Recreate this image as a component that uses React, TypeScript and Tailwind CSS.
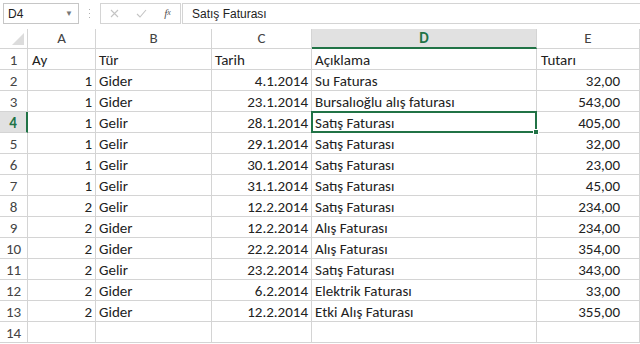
import React from "react";

const rows: [string, string, string, string, string][] = [
  ["1", "Gider", "4.1.2014", "Su Faturas", "32,00"],
  ["1", "Gider", "23.1.2014", "Bursalıoğlu alış faturası", "543,00"],
  ["1", "Gelir", "28.1.2014", "Satış Faturası", "405,00"],
  ["1", "Gelir", "29.1.2014", "Satış Faturası", "32,00"],
  ["1", "Gelir", "30.1.2014", "Satış Faturası", "23,00"],
  ["1", "Gelir", "31.1.2014", "Satış Faturası", "45,00"],
  ["2", "Gelir", "12.2.2014", "Satış Faturası", "234,00"],
  ["2", "Gider", "12.2.2014", "Alış Faturası", "234,00"],
  ["2", "Gider", "22.2.2014", "Alış Faturası", "354,00"],
  ["2", "Gelir", "23.2.2014", "Satış Faturası", "343,00"],
  ["2", "Gider", "6.2.2014", "Elektrik Faturası", "33,00"],
  ["2", "Gider", "12.2.2014", "Etki Alış Faturası", "355,00"],
];

const cols = "grid grid-cols-[28px_68px_116px_100px_225px_103px]";
const cell = "h-[21px] border-r border-b border-[#d4d4d4] flex items-center overflow-hidden whitespace-nowrap pt-[2px]";

export default function App() {
  return (
    <div className="w-[640px] h-[344px] overflow-hidden bg-white text-[#222] font-['Carlito','Lato','Liberation_Sans',sans-serif]">
      {/* formula bar */}
      <div className="h-[29px] flex items-start pt-[3px] font-['Liberation_Sans',sans-serif]">
        <div className="ml-[3px] w-[76px] h-[21px] border border-[#c6c6c6] flex items-center justify-between pl-[4px] pr-[5px] text-[12px] text-[#222]">
          <span>D4</span>
          <span className="text-[8px] text-[#777]">▼</span>
        </div>
        <div className="w-[21px] h-[21px] flex items-center justify-center">
          <svg width="3" height="11" viewBox="0 0 3 11">
            <rect x="1" y="1" width="1" height="1" fill="#b0b0b0" />
            <rect x="1" y="5" width="1" height="1" fill="#b0b0b0" />
            <rect x="1" y="9" width="1" height="1" fill="#b0b0b0" />
          </svg>
        </div>
        <div className="w-[81px] h-[21px] border border-[#d4d4d4] flex items-center">
          <div className="w-[27px] flex justify-center">
            <svg width="9" height="9" viewBox="0 0 9 9">
              <path d="M1 1L8 8M8 1L1 8" stroke="#c4c4c4" strokeWidth="1.1" />
            </svg>
          </div>
          <div className="w-[27px] flex justify-center">
            <svg width="11" height="9" viewBox="0 0 11 9">
              <path d="M1 5L4 8L10 1" stroke="#c4c4c4" strokeWidth="1.1" fill="none" />
            </svg>
          </div>
          <div className="w-[25px] flex justify-center text-[11px] italic text-[#555] font-['Liberation_Serif',serif]">
            f<span className="text-[8px] mt-[2px]">x</span>
          </div>
        </div>
        <div className="ml-[1px] flex-1 h-[21px] border border-[#d4d4d4] border-r-0 flex items-center pl-[9px] text-[12px] text-[#222]">
          Satış Faturası
        </div>
      </div>

      {/* column headers */}
      <div className={cols}>
        <div className="h-[20px] border-r border-b border-[#d4d4d4] relative">
          <svg className="absolute right-[3px] bottom-[3px]" width="12" height="12" viewBox="0 0 12 12">
            <path d="M12 0L12 12L0 12Z" fill="#dcdcdc" />
          </svg>
        </div>
        {["A", "B", "C"].map((c) => (
          <div key={c} className="h-[20px] border-r border-b border-[#d4d4d4] flex items-center justify-center text-[15px] text-[#444]">
            {c}
          </div>
        ))}
        <div className="h-[20px] bg-[#e1e1e1] border-r border-[#d4d4d4] border-b-2 border-b-[#217346] flex items-center justify-center text-[15px] font-bold text-[#217346] pt-[1px]">
          D
        </div>
        <div className="h-[20px] border-r border-b border-[#d4d4d4] flex items-center justify-center text-[15px] text-[#444]">
          E
        </div>
      </div>

      {/* row 1 */}
      <div className={cols}>
        <div className={`${cell} justify-center text-[15px] text-[#444]`}>1</div>
        <div className={`${cell} pl-[4px] text-[15px]`}>Ay</div>
        <div className={`${cell} pl-[3px] text-[15px]`}>Tür</div>
        <div className={`${cell} pl-[3px] text-[15px]`}>Tarih</div>
        <div className={`${cell} pl-[3px] text-[15px]`}>Açıklama</div>
        <div className={`${cell} pl-[4px] text-[15px]`}>Tutarı</div>
      </div>

      {rows.map((r, i) => {
        const n = i + 2;
        const sel = n === 4;
        return (
          <div key={n} className={cols}>
            {sel ? (
              <div className="h-[21px] bg-[#e1e1e1] border-b border-[#d4d4d4] border-r-2 border-r-[#217346] flex items-center justify-center text-[15px] font-bold text-[#217346] pt-[2px]">
                {n}
              </div>
            ) : (
              <div className={`${cell} justify-center text-[15px] text-[#444]`}>{n}</div>
            )}
            <div className={`${cell} justify-end pr-[3px] text-[15px]`}>{r[0]}</div>
            <div className={`${cell} pl-[3px] text-[15px]`}>{r[1]}</div>
            <div className={`${cell} justify-end pr-[3px] text-[15px]`}>{r[2]}</div>
            <div className={`${cell} pl-[3px] text-[15px] ${sel ? "relative overflow-visible" : ""}`}>
              {r[3]}
              {sel && (
                <div className="absolute left-[-1px] top-[-1px] right-[-1px] bottom-[-1px] border-2 border-[#217346]">
                  <div className="absolute right-[-4px] bottom-[-4px] w-[6px] h-[6px] bg-[#217346] border border-white" />
                </div>
              )}
            </div>
            <div className={`${cell} justify-end pr-[19px] text-[15px]`}>{r[4]}</div>
          </div>
        );
      })}

      {/* row 14 */}
      <div className={cols}>
        <div className={`${cell} justify-center text-[15px] text-[#444]`}>14</div>
        <div className={cell} />
        <div className={cell} />
        <div className={cell} />
        <div className={cell} />
        <div className={cell} />
      </div>
    </div>
  );
}
